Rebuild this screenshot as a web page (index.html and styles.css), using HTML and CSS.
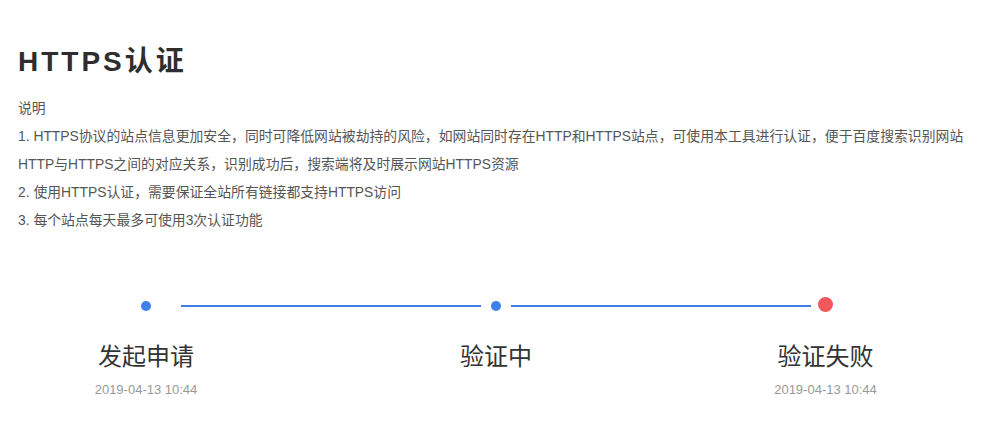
FILE: index.html
```html
<!DOCTYPE html>
<html lang="zh-CN">
<head>
<meta charset="utf-8">
<title>HTTPS认证</title>
<link rel="stylesheet" href="styles.css">
</head>
<body>
<div class="page">
  <h1 class="title">HTTPS认证</h1>
  <div class="intro">
    <p>说明</p>
    <p>1. HTTPS协议的站点信息更加安全，同时可降低网站被劫持的风险，如网站同时存在HTTP和HTTPS站点，可使用本工具进行认证，便于百度搜索识别网站HTTP与HTTPS之间的对应关系，识别成功后，搜索端将及时展示网站HTTPS资源</p>
    <p>2. 使用HTTPS认证，需要保证全站所有链接都支持HTTPS访问</p>
    <p>3. 每个站点每天最多可使用3次认证功能</p>
  </div>
  <div class="steps">
    <div class="step">
      <div class="dot-box"><span class="dot"></span></div>
      <div class="step-label">发起申请</div>
      <div class="step-date">2019-04-13 10:44</div>
    </div>
    <div class="connector first"></div>
    <div class="step">
      <div class="dot-box"><span class="dot"></span></div>
      <div class="step-label">验证中</div>
      <div class="step-date"></div>
    </div>
    <div class="connector second"></div>
    <div class="step step-fail">
      <div class="dot-box"><span class="dot dot-fail"></span></div>
      <div class="step-label">验证失败</div>
      <div class="step-date">2019-04-13 10:44</div>
    </div>
  </div>
</div>
</body>
</html>
```
FILE: styles.css
```css
html, body {
  margin: 0;
  padding: 0;
  background: #ffffff;
}

.page {
  padding: 42px 10px 0 18px;
  font-family: "Liberation Sans", "Noto Sans CJK SC", sans-serif;
  color: #555555;
}

.title {
  margin: 0;
  font-size: 28px;
  line-height: 40px;
  font-weight: bold;
  letter-spacing: 3px;
  color: #2e2e2e;
}

.intro {
  margin-top: 12px;
  font-size: 13.85px;
  line-height: 28px;
  color: #555555;
}

.intro p {
  margin: 0;
}

.steps {
  display: flex;
  align-items: flex-start;
  margin-top: 63px;
  padding-left: 123px;
}

.step {
  width: 10px;
  display: flex;
  flex-direction: column;
  align-items: center;
  flex: none;
}

.step-fail {
  width: 15px;
}

.dot-box {
  height: 15px;
  width: 100%;
  display: flex;
  align-items: flex-end;
  justify-content: center;
}

.dot {
  width: 10px;
  height: 10px;
  border-radius: 50%;
  background: #3f80ea;
  margin-bottom: 1px;
}

.dot-fail {
  width: 15px;
  height: 15px;
  margin-bottom: 0;
  background: #f2575c;
}

.step-label {
  margin-top: 29px;
  font-size: 24px;
  line-height: 32px;
  color: #333333;
  white-space: nowrap;
}

.step-date {
  margin-top: 7px;
  height: 20px;
  font-size: 13px;
  line-height: 20px;
  color: #999999;
  white-space: nowrap;
}

.connector {
  flex: none;
  width: 300px;
  height: 2px;
  margin-top: 8px;
  background: #3f7ee6;
}

.connector.first {
  margin-left: 30px;
  margin-right: 10px;
}

.connector.second {
  margin-left: 10px;
  margin-right: 7px;
}
```
